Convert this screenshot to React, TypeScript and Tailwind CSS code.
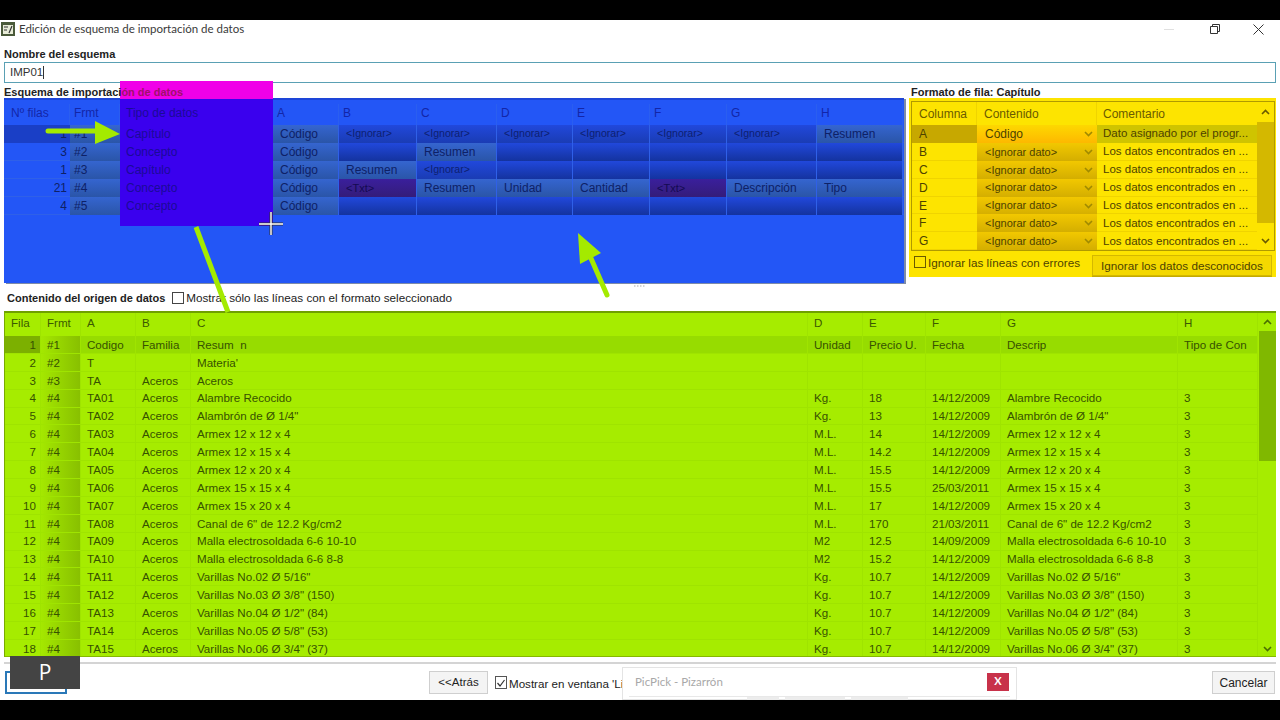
const schemaCols = ["Nº filas", "Frmt", "Tipo de datos", "A", "B", "C", "D", "E", "F", "G", "H"];

const schemaRows = [
  { n: "1", f: "#1", t: "Capítulo", cells: ["Código", "<Ignorar>", "<Ignorar>", "<Ignorar>", "<Ignorar>", "<Ignorar>", "<Ignorar>", "Resumen"] },
  { n: "3", f: "#2", t: "Concepto", cells: ["Código", "", "Resumen", "", "", "", "", ""] },
  { n: "1", f: "#3", t: "Capítulo", cells: ["Código", "Resumen", "<Ignorar>", "", "", "", "", ""] },
  { n: "21", f: "#4", t: "Concepto", cells: ["Código", "<Txt>", "Resumen", "Unidad", "Cantidad", "<Txt>", "Descripción", "Tipo"] },
  { n: "4", f: "#5", t: "Concepto", cells: ["Código", "", "", "", "", "", "", ""] },
];

const schemaGrid = "grid grid-cols-[66px_50px_153px_66px_78px_80px_76px_77px_77px_90px_86px]";

const schemaCell = (v: string) => {
  if (v === "<Txt>") return "bg-gradient-to-b from-[#3a1f9c] to-[#341c7a] text-[#140a50] text-[11px]";
  if (v === "<Ignorar>") return "bg-gradient-to-b from-[#2148dc] to-[#1a3cb4] text-[#0d1f70] text-[10.6px]";
  if (v === "") return "bg-gradient-to-b from-[#2148dc] to-[#14339f]";
  return "bg-gradient-to-b from-[#3565d0] to-[#2a55a8] text-[#0e2166]";
};

const formatRows = [
  ["A", "Código", "Dato asignado por el progr..."],
  ["B", "<Ignorar dato>", "Los datos encontrados en ..."],
  ["C", "<Ignorar dato>", "Los datos encontrados en ..."],
  ["D", "<Ignorar dato>", "Los datos encontrados en ..."],
  ["E", "<Ignorar dato>", "Los datos encontrados en ..."],
  ["F", "<Ignorar dato>", "Los datos encontrados en ..."],
  ["G", "<Ignorar dato>", "Los datos encontrados en ..."],
];

const dataCols = ["Fila", "Frmt", "A", "B", "C", "D", "E", "F", "G", "H"];

const dataRows = [
  ["1", "#1", "Codigo", "Familia", "Resum  n", "Unidad", "Precio U.", "Fecha", "Descrip", "Tipo de Con"],
  ["2", "#2", "T", "", "Materia'", "", "", "", "", ""],
  ["3", "#3", "TA", "Aceros", "Aceros", "", "", "", "", ""],
  ["4", "#4", "TA01", "Aceros", "Alambre Recocido", "Kg.", "18", "14/12/2009", "Alambre Recocido", "3"],
  ["5", "#4", "TA02", "Aceros", "Alambrón de Ø 1/4\"", "Kg.", "13", "14/12/2009", "Alambrón de Ø 1/4\"", "3"],
  ["6", "#4", "TA03", "Aceros", "Armex 12 x 12 x 4", "M.L.", "14", "14/12/2009", "Armex 12 x 12 x 4", "3"],
  ["7", "#4", "TA04", "Aceros", "Armex 12 x 15 x 4", "M.L.", "14.2", "14/12/2009", "Armex 12 x 15 x 4", "3"],
  ["8", "#4", "TA05", "Aceros", "Armex 12 x 20 x 4", "M.L.", "15.5", "14/12/2009", "Armex 12 x 20 x 4", "3"],
  ["9", "#4", "TA06", "Aceros", "Armex 15 x 15 x 4", "M.L.", "15.5", "25/03/2011", "Armex 15 x 15 x 4", "3"],
  ["10", "#4", "TA07", "Aceros", "Armex 15 x 20 x 4", "M.L.", "17", "14/12/2009", "Armex 15 x 20 x 4", "3"],
  ["11", "#4", "TA08", "Aceros", "Canal de 6\" de 12.2 Kg/cm2", "M.L.", "170", "21/03/2011", "Canal de 6\" de 12.2 Kg/cm2", "3"],
  ["12", "#4", "TA09", "Aceros", "Malla electrosoldada 6-6 10-10", "M2", "12.5", "14/09/2009", "Malla electrosoldada 6-6 10-10", "3"],
  ["13", "#4", "TA10", "Aceros", "Malla electrosoldada 6-6 8-8", "M2", "15.2", "14/12/2009", "Malla electrosoldada 6-6 8-8", "3"],
  ["14", "#4", "TA11", "Aceros", "Varillas No.02 Ø 5/16\"", "Kg.", "10.7", "14/12/2009", "Varillas No.02 Ø 5/16\"", "3"],
  ["15", "#4", "TA12", "Aceros", "Varillas No.03 Ø 3/8\" (150)", "Kg.", "10.7", "14/12/2009", "Varillas No.03 Ø 3/8\" (150)", "3"],
  ["16", "#4", "TA13", "Aceros", "Varillas No.04 Ø 1/2\" (84)", "Kg.", "10.7", "14/12/2009", "Varillas No.04 Ø 1/2\" (84)", "3"],
  ["17", "#4", "TA14", "Aceros", "Varillas No.05 Ø 5/8\" (53)", "Kg.", "10.7", "14/12/2009", "Varillas No.05 Ø 5/8\" (53)", "3"],
  ["18", "#4", "TA15", "Aceros", "Varillas No.06 Ø 3/4\" (37)", "Kg.", "10.7", "14/12/2009", "Varillas No.06 Ø 3/4\" (37)", "3"],
];

const dataGrid = "grid grid-cols-[36px_40px_55px_55px_617px_55px_63px_75px_177px_80px]";

function ScrollArrow({ up, color }: { up?: boolean; color: string }) {
  return (
    <svg width="9" height="6" viewBox="0 0 9 6" fill="none" stroke={color} strokeWidth="1.6">
      <path d={up ? "M1 5l3.5-3.5L8 5" : "M1 1l3.5 3.5L8 1"} />
    </svg>
  );
}

function WindowTitle() {
  return (
    <div className="flex items-center h-[20px] mt-[-1px] ml-[-4px] mr-[-4px] text-[11.5px] text-[#3a3a3a] font-['Lato',sans-serif]">
      <svg className="ml-[1px] mr-[4px]" width="14" height="14" viewBox="0 0 14 14">
        <rect width="14" height="14" fill="#4a5a3a" />
        <rect x="2" y="3" width="10" height="9" fill="#e8ecd8" />
        <path d="M3 5h4M3 8h3M8 11l3-7" stroke="#333" strokeWidth="1.2" />
      </svg>
      <span>Edición de esquema de importación de datos</span>
      <div className="ml-auto flex items-center">
        <div className="w-[10px] h-px bg-[#e0e0e0] mr-[36px]" />
        <svg width="10" height="10" viewBox="0 0 10 10" fill="none" stroke="#333" className="mr-[33px]">
          <path d="M.5 2.5h7v7h-7zM2.5 2.5v-2h7v7h-2" />
        </svg>
        <svg width="11" height="11" viewBox="0 0 11 11" fill="none" stroke="#333" className="mr-[16px]">
          <path d="M.5.5l10 10M10.5.5l-10 10" />
        </svg>
      </div>
    </div>
  );
}

function SchemaPanel() {
  return (
    <div className="w-[900px] h-[185px] bg-[#2356f6] border-t-[2px] border-[#1d45d8] pt-[4px] shadow-[2px_1px_0_#7d8ba8]">
      <div className={`${schemaGrid} h-[21px] items-center text-[#1326a8]`}>
        {schemaCols.map((c, i) => (
          <div
            key={c}
            className={`h-full flex items-center pb-[3px] ${i === 2 ? "relative z-[2] text-[#1a0a98]" : "border-r border-[#2a5ef0]"} ${
              i === 0 ? "pl-[7px]" : i === 2 ? "pl-[6px]" : "pl-[4px]"
            }`}
          >
            {c}
          </div>
        ))}
      </div>
      {schemaRows.map((r, i) => (
        <div key={r.f} className={`${schemaGrid} h-[18px] border-b border-[#2f60e8]`}>
          <div className={`flex items-center justify-end pr-[3px] text-[#0e2166] ${i === 0 ? "bg-[#1a3fc6]" : ""}`}>{r.n}</div>
          <div className="flex items-center pl-[4px] bg-gradient-to-b from-[#3565d0] to-[#2a55a8] text-[#0e2166]">{r.f}</div>
          <div className="relative z-[2] flex items-center pl-[6px] text-[#1a0a98]">{r.t}</div>
          {r.cells.map((c, j) => (
            <div key={j} className={`flex items-center pl-[7px] border-r border-[#2f60e8] ${schemaCell(c)}`}>
              {c}
            </div>
          ))}
        </div>
      ))}
    </div>
  );
}

function FormatPanel() {
  return (
    <div className="w-[367px] h-[179px] bg-[#fde400] p-[3px_1px_0_2px]">
      <div className="border border-[#b09a00] h-[150px] flex">
        <div className="flex-1">
          <div className="grid grid-cols-[65px_120px_160px] h-[23px] text-[#6a5a00]">
            <div className="flex items-center pl-[7px] border-r border-[#f0d400]">Columna</div>
            <div className="flex items-center pl-[7px] border-r border-[#f0d400]">Contenido</div>
            <div className="flex items-center pl-[6px]">Comentario</div>
          </div>
          {formatRows.map((r, i) => (
            <div key={r[0]} className="grid grid-cols-[65px_120px_160px] h-[17.88px] border-b border-[#f0d400] text-[#4d4200]">
              <div className={`flex items-center pl-[7px] ${i === 0 ? "bg-[#c7a800]" : ""}`}>{r[0]}</div>
              <div
                className={`flex items-center justify-between pl-[8px] pr-[4px] bg-gradient-to-b ${
                  i === 0 ? "from-[#fdd800] to-[#fdb800] pl-[7px]" : "from-[#f2c800] to-[#d4ae00] text-[11px]"
                }`}
              >
                <span>{r[1]}</span>
                <ScrollArrow color="#a08a00" />
              </div>
              <div className={`flex items-center pl-[6px] text-[11.5px] whitespace-nowrap overflow-hidden ${i === 0 ? "bg-[#cfc400]" : ""}`}>
                {r[2]}
              </div>
            </div>
          ))}
        </div>
        <div className="w-[17px] flex flex-col items-center">
          <div className="h-[20px] flex items-center"><ScrollArrow up color="#6a5a00" /></div>
          <div className="w-full h-[101px] bg-[#d4b800]" />
          <div className="flex-1 flex items-end pb-[6px]"><ScrollArrow color="#6a5a00" /></div>
        </div>
      </div>
      <div className="flex items-start text-[#4d4200] mt-[-1px] text-[11.7px]">
        <div className="w-[12px] h-[12px] border border-[#6a5a00] mt-[6px] ml-[3px] mr-[2px]" />
        <span className="mt-[4px]">Ignorar las líneas con errores</span>
        <div className="ml-auto mr-[3px] mt-[5px] w-[180px] h-[21px] flex items-center justify-center border border-[#d4b800] bg-[#f4d800] shadow-[0_1px_0_#c4aa00]">
          Ignorar los datos desconocidos
        </div>
      </div>
    </div>
  );
}

function DataPanel() {
  return (
    <div className="h-[346px] bg-[#a6ec00] border-t-[2px] border-[#6fa000] border-l border-l-[#78aa00] border-b border-b-[#86b800] flex text-[11.6px]">
      <div className="w-[1253px] overflow-hidden">
        <div className={`${dataGrid} h-[23px] text-[#3b5a00]`}>
          {dataCols.map((c) => (
            <div key={c} className="flex items-center border-r border-[#9fe400] pl-[6px] pb-[4px]">
              {c}
            </div>
          ))}
        </div>
        {dataRows.map((r, i) => (
          <div key={r[0]} className={`${dataGrid} h-[17.88px] border-b border-[#9fe400] text-[#365200] ${i === 0 ? "bg-[#97dc00]" : ""}`}>
            {r.map((c, j) => (
              <div
                key={j}
                className={`flex items-center whitespace-pre overflow-hidden border-r border-[#9fe400] pl-[6px] ${
                  j === 0 ? `justify-end pr-[4px] ${i === 0 ? "bg-[#7cb000]" : ""}` : ""
                } ${j === 1 ? "pl-[5px] bg-gradient-to-r from-[#a4e800] to-[#88c000]" : ""}`}
              >
                {c}
              </div>
            ))}
          </div>
        ))}
      </div>
      <div className="w-[17px] flex flex-col items-center ml-auto">
        <div className="h-[18px] flex items-center"><ScrollArrow up color="#4a6e00" /></div>
        <div className="w-full h-[130px] bg-[#80b800]" />
        <div className="flex-1 flex items-end pb-[4px]"><ScrollArrow color="#4a6e00" /></div>
      </div>
    </div>
  );
}

function Footer() {
  return (
    <div className="mt-[5px] border-t-[2px] border-[#d4d4d4] flex items-start text-[12px] text-[#222] h-[38px]">
      <div className="ml-[1px] mt-[7px] w-[62px] h-[23px] border-2 border-[#2a78b8]" />
      <div className="ml-[362px] mt-[7px] w-[59px] h-[23px] flex items-center justify-center border border-[#cfcfcf] bg-[#f4f4f4] text-[11.5px]">&lt;&lt;Atrás</div>
      <div className="ml-[7px] mt-[12px] w-[12px] h-[13px] border border-[#555] flex items-center justify-center">
        <svg width="10" height="10" viewBox="0 0 10 10" fill="none" stroke="#333" strokeWidth="1.2"><path d="M1.5 5l2.5 3 4.5-6" /></svg>
      </div>
      <span className="ml-[2px] mt-[11px] whitespace-nowrap text-[11.6px]">Mostrar en ventana 'Li</span>
      <div className="ml-auto mr-[1px] mt-[7px] w-[63px] h-[23px] flex items-center justify-center border border-[#cfcfcf] bg-[#f4f4f4]">Cancelar</div>
    </div>
  );
}

export default function App() {
  return (
    <div className="relative h-[720px] w-[1280px] overflow-hidden bg-black py-[20px] font-['Liberation_Sans',Arial,sans-serif] text-[12px] text-[#222]">
      <div className="h-[680px] bg-white px-[4px] overflow-hidden">
        <WindowTitle />
        <div className="mt-[8px] h-[14px] leading-[14px] font-bold text-[11px] text-[#222]">Nombre del esquema</div>
        <div className="mt-[1px] mb-[2px] h-[21px] border border-[#5aa0b4] flex items-center pl-[5px] text-[#333] text-[11.5px]">
          IMP01<span className="w-px h-[13px] bg-[#333]" />
        </div>
        <div className="flex gap-[5px]">
          <div>
            <div className="relative z-[2] h-[13px] leading-[14px] font-bold text-[11px]">
              Esquema de importaci<span className="text-[#a0106a]">ón de datos</span>
            </div>
            <SchemaPanel />
          </div>
          <div>
            <div className="h-[13px] leading-[14px] font-bold text-[11px] ml-[2px]">Formato de fila: Capítulo</div>
            <FormatPanel />
          </div>
        </div>
        <div className="h-[28px] flex items-center pl-[3px] pt-[2px]">
          <span className="font-bold text-[11px]">Contenido del origen de datos</span>
          <div className="w-[12px] h-[12px] border border-[#444] ml-[7px] mr-[2px]" />
          <span className="text-[11.7px]">Mostrar sólo las líneas con el formato seleccionado</span>
        </div>
        <DataPanel />
        <Footer />
      </div>

      {/* drawing board overlays from the recording */}
      <div className="absolute z-[1] left-[120px] top-[81px] w-[153px] h-[145px] flex flex-col">
        <div className="h-[18px] bg-[#f000e8]" />
        <div className="flex-1 bg-[#3a00ee]" />
      </div>

      <svg className="absolute z-[3] left-0 top-0 pointer-events-none" width="1280" height="720" viewBox="0 0 1280 720">
        <path d="M48 131H98" stroke="#a4ea00" strokeWidth="5" strokeLinecap="round" />
        <path d="M95 121L120 134L95 144Z" fill="#a4ea00" />
        <path d="M196 227L228 312" stroke="#a4ea00" strokeWidth="5" />
        <path d="M578 233L601 253L580 264Z" fill="#a4ea00" />
        <path d="M590 256L607 295" stroke="#a4ea00" strokeWidth="5" strokeLinecap="round" />
        <path d="M271 212V235M259 224H283" stroke="#333" strokeWidth="3" />
        <path d="M271 212V235M259 224H283" stroke="#fff" strokeWidth="1.4" />
        <path d="M634 286h1.5M637 286h1.5M640 286h1.5M643 286h1.5" stroke="#aaa" />
      </svg>

      <div className="absolute z-[3] left-[10px] top-[656px] w-[70px] h-[33px] bg-[#444444] flex items-center justify-center text-[21px] text-white font-['Open_Sans',sans-serif]">
        P
      </div>

      <div className="absolute z-[3] left-[622px] top-[667px] w-[395px] h-[33px] bg-white border border-[#e4e4e4] pl-[12px]">
        <div className="flex items-center h-[28px] text-[11.5px] text-[#a8a8a8] font-['Lato',sans-serif]">
          PicPick - Pizarrón
          <div className="ml-auto mr-[7px] mt-[-1px] w-[22px] h-[18px] bg-[#c8324a] text-white text-[11px] font-bold flex items-center justify-center">X</div>
        </div>
        <div className="ml-[-6px] mr-[6px] h-[4px] border-t border-[#e8e8e8] flex pl-[118px] gap-[6px]">
          <div className="w-[32px] h-[3px] bg-[#ececec]" />
          <div className="w-[60px] h-[3px] bg-[#ececec]" />
          <div className="w-[57px] h-[3px] bg-[#ececec]" />
        </div>
      </div>
    </div>
  );
}
